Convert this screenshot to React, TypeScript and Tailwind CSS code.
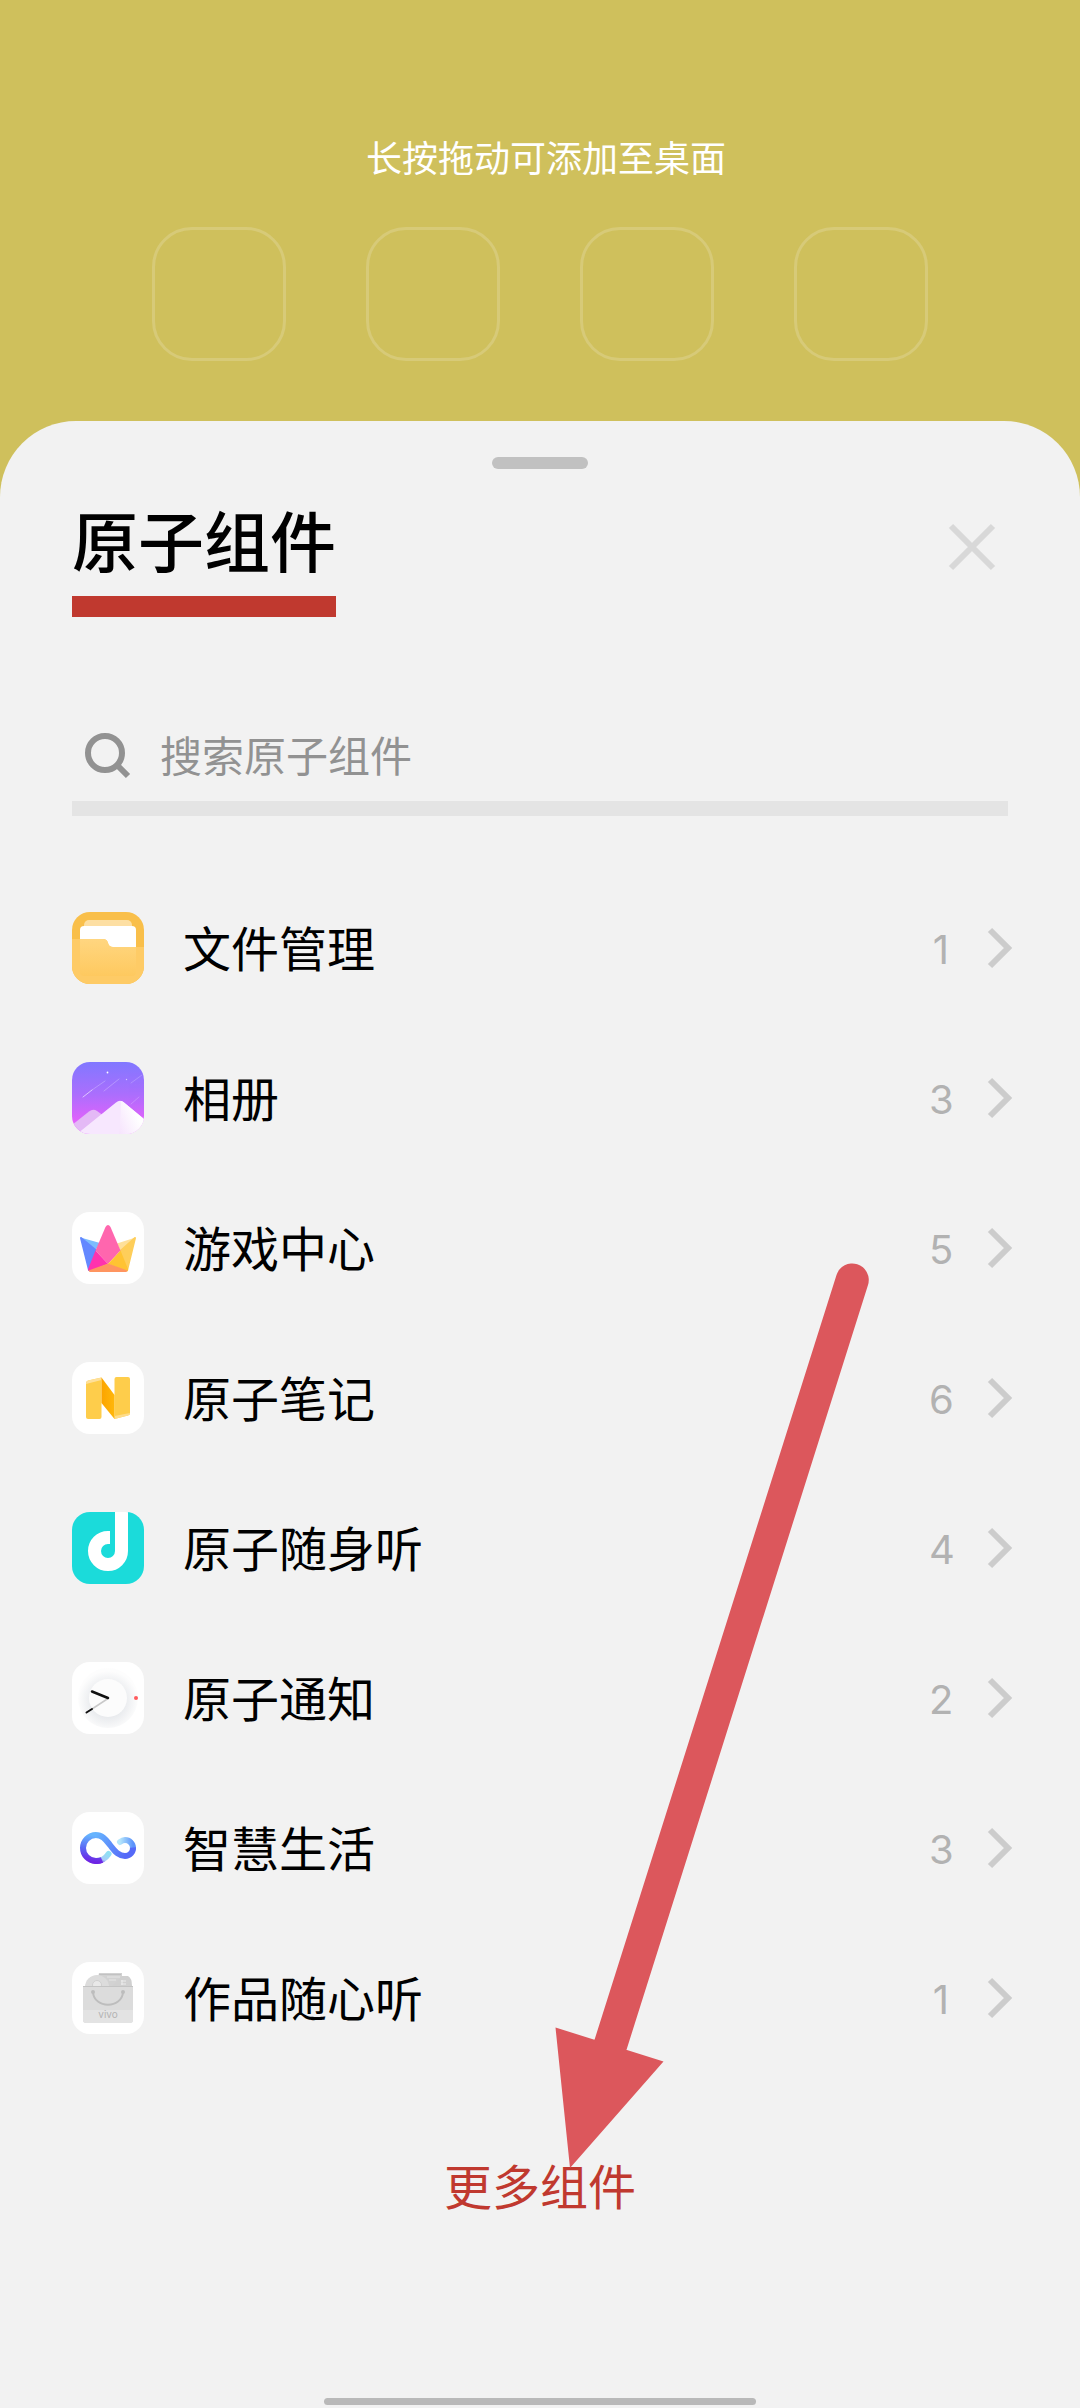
import type { ReactNode } from "react";

interface WidgetGroup {
  name: string;
  count: number;
  icon: ReactNode;
}

interface AppIconProps {
  className: string;
  children: ReactNode;
}

function AppIcon({ className, children }: AppIconProps) {
  return (
    <svg
      viewBox="0 0 72 72"
      aria-hidden="true"
      className={`size-[72px] shrink-0 rounded-[18px] ${className}`}
    >
      {children}
    </svg>
  );
}

function FilesIcon() {
  return (
    <AppIcon className="bg-[#f9bf4a]">
      <defs>
        <linearGradient id="folder" x1="0" y1="0" x2="0" y2="1">
          <stop offset="0" stopColor="#ffd680" />
          <stop offset="1" stopColor="#fec95f" />
        </linearGradient>
      </defs>
      <rect x="12" y="8" width="48" height="20" rx="5" fill="#fddfa3" />
      <rect x="8" y="14" width="56" height="36" rx="4" fill="#fff" />
      <path d="M0 27H31Q35 27 36 31Q37 35 41 35H72V72H0Z" fill="#fecb66" />
      <path
        d="M8 27H31Q35 27 36 31Q37 35 41 35H64V60Q64 64 60 64H12Q8 64 8 60Z"
        fill="url(#folder)"
      />
    </AppIcon>
  );
}

function AlbumIcon() {
  return (
    <AppIcon className="bg-white">
      <defs>
        <linearGradient id="sky" x1="0" y1="0" x2="0" y2="1">
          <stop offset="0" stopColor="#8178ff" />
          <stop offset="0.45" stopColor="#ab6efd" />
          <stop offset="0.85" stopColor="#e561fb" />
        </linearGradient>
        <linearGradient id="snow" x1="0" y1="1" x2="1" y2="0.4">
          <stop offset="0" stopColor="#f6e3fd" />
          <stop offset="0.8" stopColor="#ffffff" />
        </linearGradient>
      </defs>
      <rect width="72" height="72" fill="url(#sky)" />
      <g stroke="#fff" strokeLinecap="round">
        <path d="M11 35L20 28" opacity="0.6" />
        <path d="M20 28L33 19" opacity="0.25" />
        <path d="M32 29L47 17" opacity="0.25" />
        <path d="M59 21L70 13M59 42L67 35" opacity="0.2" />
      </g>
      <circle cx="35.500" cy="10.500" r="0.9" fill="#fff" />
      <circle cx="54.500" cy="17.500" r="0.7" fill="#fff" opacity="0.6" />
      <path d="M0 63L17 49.500Q21 46.500 25 49L32 54L12 72H0Z" fill="#e4b9f6" />
      <path d="M5 72L44 40.500Q48 37 52 40.500L72 57V72Z" fill="#f7e7fe" />
      <path d="M49 39Q51 39 52 40.500L72 57V72H47L48.500 52Z" fill="url(#snow)" />
    </AppIcon>
  );
}

function GamesIcon() {
  return (
    <AppIcon className="bg-white">
      <g strokeLinejoin="round">
        <path d="M8.500 25.500L28 31L23 39Z" fill="#7cbcfe" />
        <path d="M9 26L23.500 38L17 58Z" fill="#6488ff" stroke="#6488ff" strokeWidth="2" />
        <path d="M63.500 25.500L45 31.500L48.500 39Z" fill="#fee09a" />
        <path d="M63 26L48.500 39L55 58.500Z" fill="#fece5a" stroke="#fece5a" strokeWidth="2" />
        <path d="M33.500 15Q36 11 38.500 15L48.500 38.500L36 52L23.500 38.500Z" fill="#ff66ae" />
        <path d="M23.500 38.500L36 52L18 59Q15 59 16.500 56Z" fill="#ff32ae" />
        <path d="M48.500 38.500L36 52L54 59Q56.500 59 56 57Z" fill="#ffc332" />
        <path d="M36 51.500L55.500 58.500Q55 60 53.500 60H18.500Q17 60 16.500 58.500Z" fill="#ff9560" />
      </g>
    </AppIcon>
  );
}

function NotesIcon() {
  return (
    <AppIcon className="bg-white">
      <defs>
        <linearGradient id="fold" x1="0" y1="0" x2="1" y2="0">
          <stop offset="0" stopColor="#fca400" />
          <stop offset="1" stopColor="#ffb70a" />
        </linearGradient>
      </defs>
      <path d="M14 21Q14 19 16 18.500L29.500 15.500V55Q29.500 57 27.500 57H16Q14 57 14 55Z" fill="#fecd4b" />
      <path d="M14 22Q14 19 16 18.500L29.500 15.500V18Z" fill="#fee09a" />
      <path d="M42.500 17Q42.500 15 44.500 15H56Q58 15 58 17V51.500Q58 53 56 53.500L42.500 57Z" fill="#fecd4b" />
      <path d="M42.500 54L58 51Q58 53 56 53.500L42.500 57Z" fill="#fedc8a" />
      <path d="M29.500 15.500L42.500 33V57L29.500 41Z" fill="url(#fold)" />
    </AppIcon>
  );
}

function MusicIcon() {
  return (
    <AppIcon className="bg-[#1bdbda]">
      <path
        d="M38 25.500H36A13.500 13.500 0 1 0 49.500 39V0"
        fill="none"
        stroke="#fff"
        strokeWidth="13"
      />
    </AppIcon>
  );
}

function NotificationIcon() {
  return (
    <AppIcon className="bg-white">
      <defs>
        <radialGradient id="dial" cx="0.5" cy="0.55" r="0.5">
          <stop offset="0.55" stopColor="#e9ebee" />
          <stop offset="1" stopColor="#fdfdfd" />
        </radialGradient>
      </defs>
      <circle cx="36" cy="36" r="30" fill="url(#dial)" />
      <circle cx="36" cy="36" r="19" fill="#fcfcfc" />
      <path d="M20 47L36 36.500" stroke="#c9c9c9" strokeWidth="1.500" />
      <path d="M14.500 50.500L20 47" stroke="#111" strokeWidth="2" strokeLinecap="round" />
      <path d="M20 29.500L36 36" stroke="#111" strokeWidth="2.500" strokeLinecap="round" />
      <circle cx="64" cy="36" r="2" fill="#ff5b5e" />
    </AppIcon>
  );
}

function SmartLifeIcon() {
  return (
    <AppIcon className="bg-white">
      <defs>
        <linearGradient id="loopLeft" x1="0.3" y1="0" x2="0.2" y2="1">
          <stop offset="0" stopColor="#66b4fe" />
          <stop offset="0.5" stopColor="#5a6bf5" />
          <stop offset="1" stopColor="#6e24e4" />
        </linearGradient>
        <linearGradient id="loopRight" x1="0" y1="0" x2="1" y2="0.3">
          <stop offset="0" stopColor="#66b4fe" />
          <stop offset="1" stopColor="#5569f8" />
        </linearGradient>
        <linearGradient id="tailLeft" x1="0" y1="1" x2="1" y2="0">
          <stop offset="0" stopColor="#6e24e4" />
          <stop offset="0.4" stopColor="#a9cdf8" />
          <stop offset="1" stopColor="#8fe0f4" />
        </linearGradient>
        <linearGradient id="tailRight" x1="0" y1="0" x2="1" y2="0">
          <stop offset="0" stopColor="#b5e6fb" />
          <stop offset="1" stopColor="#5c93fb" />
        </linearGradient>
      </defs>
      <g fill="none" strokeWidth="6">
        <path d="M24 49Q32 49 36.500 42" stroke="url(#tailLeft)" strokeLinecap="round" />
        <path d="M30 48Q27 49.200 24 49A13 13 0 0 1 24 23" stroke="url(#loopLeft)" />
        <path
          d="M48 30Q50.500 28 53 28A8 8 0 0 1 61 36"
          stroke="url(#tailRight)"
          strokeLinecap="round"
        />
        <path
          d="M23.500 23C31 23 34 28 38 33C43 39 46 44 53 44A8 8 0 0 0 61 35.500"
          stroke="url(#loopRight)"
        />
      </g>
    </AppIcon>
  );
}

function StoreIcon() {
  return (
    <AppIcon className="bg-white">
      <path d="M27 11H50V24H24Z" fill="#d2d2d2" />
      <path d="M27 12.500H49" stroke="#c2c2c2" />
      <circle cx="25" cy="25" r="12" fill="#dcdcdc" />
      <circle cx="25" cy="23" r="4.500" fill="#e8e8e8" stroke="#cfcfcf" />
      <path d="M35 15H48M37 18H44" stroke="#e6e6e6" />
      <path d="M40 24L50 14H56Q60 16 60 24Z" fill="#d0d0d0" />
      <path d="M49 19H54M49 22H54M50 18V23" stroke="#ececec" />
      <path d="M11 24H61V58Q61 61 58 61H14Q11 61 11 58Z" fill="#dcdcdc" />
      <path d="M11 48H61V58Q61 61 58 61H14Q11 61 11 58Z" fill="#e3e3e3" />
      <path d="M11 24.500H61" stroke="#c4c4c4" />
      <path d="M21 30C22 47 50 47 51 30" fill="none" stroke="#bdbdbd" strokeWidth="2" />
      <circle cx="21" cy="30" r="2" fill="#bdbdbd" />
      <circle cx="51" cy="30" r="2" fill="#bdbdbd" />
      <text
        x="36"
        y="56"
        textAnchor="middle"
        fontSize="10"
        fill="#b4b4b4"
        className="font-['Inter',sans-serif]"
      >
        vivo
      </text>
    </AppIcon>
  );
}

const groups: WidgetGroup[] = [
  { name: "文件管理", count: 1, icon: <FilesIcon /> },
  { name: "相册", count: 3, icon: <AlbumIcon /> },
  { name: "游戏中心", count: 5, icon: <GamesIcon /> },
  { name: "原子笔记", count: 6, icon: <NotesIcon /> },
  { name: "原子随身听", count: 4, icon: <MusicIcon /> },
  { name: "原子通知", count: 2, icon: <NotificationIcon /> },
  { name: "智慧生活", count: 3, icon: <SmartLifeIcon /> },
  { name: "作品随心听", count: 1, icon: <StoreIcon /> },
];

function DropArea() {
  return (
    <header className="flex flex-col items-center px-[152px] pt-[132px] pb-[60px]">
      <p className="pl-3 text-[36px] leading-[48px] text-white">长按拖动可添加至桌面</p>
      <div className="mt-[47px] flex w-full justify-between">
        {[0, 1, 2, 3].map((slot) => (
          <div
            key={slot}
            className="size-[134px] rounded-[40px] border-[3px] border-[#d7ca78]"
          />
        ))}
      </div>
    </header>
  );
}

function GroupRow({ name, count, icon }: WidgetGroup) {
  return (
    <li>
      <button type="button" className="flex h-[150px] w-full items-center text-left">
        {icon}
        <span className="ml-[39px] flex-1 pb-1 text-[48px] leading-[72px] text-black">{name}</span>
        <span className="w-6 pt-1 text-center font-['Inter',sans-serif] text-[40px] leading-[48px] text-[#b2b2b2]">
          {count}
        </span>
        <svg viewBox="0 0 26 42" aria-hidden="true" className="ml-[34px] h-[42px] w-[26px]">
          <path d="M3 3L21 21L3 39" fill="none" stroke="#cccccc" strokeWidth="6" />
        </svg>
      </button>
    </li>
  );
}

function PointerArrow() {
  return (
    <svg
      viewBox="0 0 314 905"
      aria-hidden="true"
      className="pointer-events-none absolute right-[211px] bottom-[240px] h-[905px] w-[314px]"
    >
      <path
        d="M281.500 12A16.500 16.500 0 0 1 313 22L70.500 790L38.500 780ZM0.500 764.500L108.500 798.500L15 905Z"
        fill="#dc575c"
      />
    </svg>
  );
}

export default function App() {
  return (
    <div className="flex min-h-screen flex-col bg-[#cfc05c] font-['Noto_Sans_CJK_SC',sans-serif]">
      <DropArea />
      <main className="relative flex flex-1 flex-col rounded-t-[76px] bg-[#f2f2f2] px-[72px] pt-9">
        <div className="h-3 w-24 self-center rounded-full bg-[#c1c1c1]" />

        <div className="mt-6 flex items-start justify-between">
          <h1 className="border-b-[21px] border-[#c0392f] pb-3 text-[66px] leading-[91px] font-medium text-black">
            原子组件
          </h1>
          <button type="button" aria-label="关闭" className="mt-[30px] mr-3">
            <svg viewBox="0 0 48 48" className="size-12">
              <path d="M3 3L45 45M45 3L3 45" stroke="#d8d8d8" strokeWidth="6" />
            </svg>
          </button>
        </div>

        <label className="mt-[93px] flex h-[106px] items-center border-b-[15px] border-[#e4e4e4] pl-3">
          <svg viewBox="0 0 48 48" aria-hidden="true" className="size-12 shrink-0">
            <circle cx="21" cy="21" r="17" fill="none" stroke="#929292" strokeWidth="6" />
            <path d="M33 33L44 44" stroke="#929292" strokeWidth="6" />
          </svg>
          <input
            type="search"
            aria-label="搜索原子组件"
            placeholder="搜索原子组件"
            className="ml-7 min-w-0 flex-1 bg-transparent pb-1 text-[42px] leading-[60px] outline-none placeholder:text-[#929292]"
          />
        </label>

        <ul className="mt-[57px] -mr-[5px]">
          {groups.map((group) => (
            <GroupRow key={group.name} {...group} />
          ))}
        </ul>

        <a href="#more" className="mt-[75px] self-center text-[48px] leading-[72px] text-[#c0392f]">
          更多组件
        </a>

        <PointerArrow />

        <div className="mt-auto mb-[3px] h-[7px] w-[432px] self-center rounded-full bg-[#b9b9b9]" />
      </main>
    </div>
  );
}
